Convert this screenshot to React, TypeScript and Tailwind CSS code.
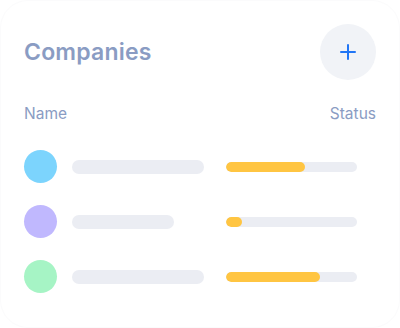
import { Plus } from 'lucide-react';

interface Company {
  color: string;
  nameWidth: number;
  progress: number;
}

const companies: Company[] = [
  { color: 'bg-[#7cd4fd]', nameWidth: 132, progress: 60 },
  { color: 'bg-[#c0b8fe]', nameWidth: 102, progress: 12 },
  { color: 'bg-[#a6f4c5]', nameWidth: 132, progress: 72 },
];

export default function App() {
  return (
    <div className="h-[328px] w-[400px] bg-white font-['Inter',sans-serif]">
      <div className="flex h-full w-full flex-col rounded-[28px] border border-[#fbfbfc] px-[23px] pt-[23px]">
        <div className="flex items-center justify-between">
          <h1 className="text-[23px] font-semibold tracking-[0.2px] text-[#8a9cc3]">Companies</h1>
          <button
            className="flex h-14 w-14 items-center justify-center rounded-full bg-[#f1f3f7] text-[#2176f5]"
            aria-label="Add"
          >
            <Plus className="h-6 w-6" strokeWidth={2} />
          </button>
        </div>
        <div className="mt-[22px] flex items-center justify-between text-[15.5px] text-[#8a9cc3]">
          <span>Name</span>
          <span>Status</span>
        </div>
        <div className="mt-[25px] flex flex-col gap-[22px]">
          {companies.map((company, index) => (
            <div key={index} className="flex items-center">
              <div className={`h-[33px] w-[33px] shrink-0 rounded-full ${company.color}`} />
              <div
                className="ml-[15px] h-[14px] rounded-full bg-[#ebedf3]"
                style={{ width: company.nameWidth }}
              />
              <div className="ml-auto mr-[19px] h-[10px] w-[131px] overflow-hidden rounded-full bg-[#ebedf3]">
                <div
                  className="h-full rounded-full bg-[#ffc542]"
                  style={{ width: `${company.progress}%` }}
                />
              </div>
            </div>
          ))}
        </div>
      </div>
    </div>
  );
}
